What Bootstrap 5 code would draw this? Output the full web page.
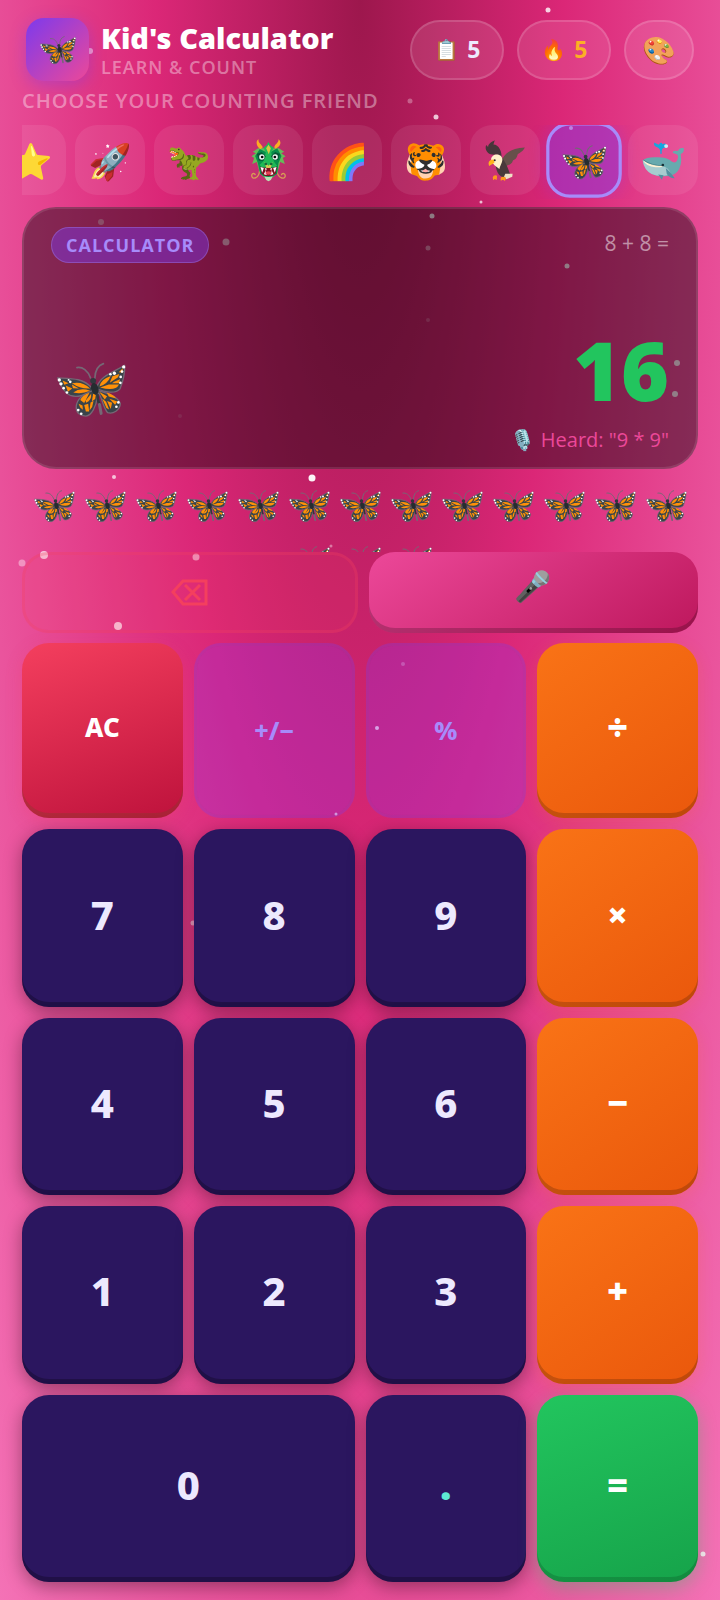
<!DOCTYPE html>
<html lang="en">
<head>
<meta charset="utf-8">
<meta name="viewport" content="width=device-width, initial-scale=1">
<title>Kid's Calculator</title>
<link rel="stylesheet" href="https://cdn.jsdelivr.net/npm/bootstrap@5.3.0/dist/css/bootstrap.min.css">
<style>
  :root { --display-font: "Noto Sans", "Open Sans", "Noto Color Emoji", sans-serif; --violet: #a78bfa; }
  body { font-family: "Open Sans", "Noto Sans", "Noto Color Emoji", sans-serif; color: #ede9fe; line-height: 1.2;
    background: radial-gradient(ellipse farthest-corner at 50% 0, #9d174d 0%, #db2777 40%, #f472b6 100%) no-repeat #f472b6; }
  button { border: 0; padding: 0; color: inherit; }
  .app-shell { padding: 18px 22px; position: relative; z-index: 1; }
  .sparkles i { position: absolute; border-radius: 50%; background: #fff; transform: translate(-50%, -50%); }
  .brand-logo { width: 63px; height: 63px; border-radius: 18px;
    background: linear-gradient(135deg, #7c3aed, #ec4899); box-shadow: 0 4px 16px rgba(124, 58, 237, .4); }
  .brand-name { font: 900 29px/34px var(--display-font); color: #fff; }
  .caption-text { font-size: 18px; line-height: 24px; font-weight: 600; letter-spacing: 1px; color: rgba(255, 255, 255, .4); }
  h2.caption-text { font-size: 20px; }
  .pill-group { gap: 13px; }
  .pill-btn { height: 60px; padding: 0 22px; border-radius: 30px; border: 2px solid rgba(255, 255, 255, .15);
    background: rgba(255, 255, 255, .1); font: 700 23px/1 var(--display-font); }
  .pill-btn span { font-size: 20px; }
  .pill-btn .palette { font-size: 27px; }
  .count-hot { color: #fbb024; }
  .friends { overflow: hidden; height: 74px; gap: 9px; }
  .friend-btn { flex: none; width: 70px; height: 70px; border-radius: 22px; font-size: 35px; line-height: 1;
    background: rgba(255, 255, 255, .08); }
  .friend-btn.chosen { background: rgba(124, 58, 237, .45); border: 3px solid var(--violet); transform: scale(1.08);
    box-shadow: 0 0 16px rgba(124, 58, 237, .3); }
  .screen { height: 262px; border-radius: 34px; border: 2px solid rgba(255, 255, 255, .1); padding: 18px 27px 14px; background: rgba(0, 0, 0, .42); }
  .mode-tag { font-size: 18px; line-height: 24px; font-weight: 700; letter-spacing: 1px; color: var(--violet); padding: 5px 14px; border-radius: 18px;
    background: rgba(124, 58, 237, .45); border: 1px solid rgba(167, 139, 250, .35); }
  .expr { font-size: 21px; color: rgba(255, 255, 255, .5); }
  .answer { font: 900 82px/88px var(--display-font); color: #22c55e; margin-bottom: 14px; }
  .heard { font-size: 20px; line-height: 26px; color: #ec4899; }
  .counters { height: 83px; overflow: hidden; padding: 20px 2px 0; row-gap: 24px; }
  .counters span { width: 51px; height: 32px; display: flex; justify-content: center; }
  .keypad { display: grid; grid-template-columns: repeat(4, 1fr); grid-template-rows: 175fr 177fr 177fr 177fr 187fr; gap: 11px; }
  .key { border-radius: 27px; font: 800 40px/1 var(--display-font); background: #2b165f; padding-bottom: 7px;
    box-shadow: inset 0 -5px 0 rgba(0, 0, 0, .25), 0 5px 18px rgba(0, 0, 0, .35); }
  .key-zero { grid-column: span 2; }
  .key-op { background: linear-gradient(145deg, #f97316, #ea580c); color: #fff; font-size: 36px; font-weight: 900;
    box-shadow: inset 0 -5px 0 rgba(0, 0, 0, .18), 0 4px 16px rgba(249, 115, 22, .2); }
  .key-clear { background: linear-gradient(160deg, #f43f5e, #be123c); color: #fff; font-size: 26px;
    box-shadow: inset 0 -5px 0 rgba(120, 70, 40, .3), 0 4px 16px rgba(244, 63, 94, .25); }
  .key-fn { background: rgba(147, 51, 234, .3); border: 3px solid rgba(124, 58, 237, .3); background-clip: padding-box; color: var(--violet);
    font-size: 25px; box-shadow: none; padding-bottom: 0; }
  .key-equals { background: linear-gradient(160deg, #22c55e, #16a34a); color: #fff; font-size: 36px; font-weight: 900;
    box-shadow: inset 0 -5px 0 rgba(0, 0, 0, .15), 0 6px 18px rgba(34, 197, 94, .35); }
  .key-dot { color: #5eead4; font-weight: 900; }
  .tools { height: 81px; gap: 11px; margin-bottom: 10px; }
  .tools button { flex: 1 1 0; border-radius: 26px; }
  .tools .tool-del { border: 3px solid rgba(244, 63, 94, .25); background: rgba(244, 63, 94, .12); color: #f43f5e; }
  .tools .tool-mic { font-size: 30px; line-height: 1; padding-bottom: 14px;
    background: linear-gradient(145deg, #ec4899, #be185d); box-shadow: inset 0 -5px 0 rgba(0, 0, 0, .2); }
</style>
</head>
<body>
<svg class="d-none" aria-hidden="true">
  <symbol id="butterfly" viewBox="15 30 220 170">
    <g stroke-linecap="round" stroke-linejoin="round">
      <path d="M122 80C114 58 98 46 81 49M135 82C136 58 144 42 161 37" fill="none" stroke="#756875" stroke-width="5"/>
      <g fill="#39444a" stroke="#756875" stroke-width="4">
        <path d="M126 110C98 80 66 82 23 80C31 101 42 125 61 133C79 139 107 134 128 119Z"/>
        <path d="M141 107C153 73 188 64 225 42C226 67 218 96 211 113C197 130 163 122 143 114Z"/>
        <path d="M127 119C101 128 81 145 79 166C78 185 90 195 108 195C126 193 139 166 142 139L145 123C157 137 160 172 174 185C190 190 211 177 212 157C205 140 188 128 145 119Z"/>
      </g>
      <g fill="#ff9108">
        <path d="M66 96Q98 89 121 112Q92 114 66 96ZM70 124Q91 108 121 119Q95 130 70 124ZM47 103L67 112L54 122ZM38 88L56 96L43 101ZM66 100L87 112L69 111Z"/>
        <path d="M149 106Q152 84 183 74Q174 98 149 106ZM151 109L177 100H208Q197 122 151 109ZM188 75L209 68L205 78L180 95ZM193 92L211 84L208 96H187ZM207 63L219 51V64Z"/>
        <path d="M119 125Q97 132 91 147L103 156ZM124 128Q126 148 109 155L107 149ZM103 162L108 181L118 181L115 158ZM86 158L98 163L99 176L91 169ZM122 154L131 150L127 168L119 178ZM130 128L138 131L136 144L126 151Z"/>
        <path d="M148 122L172 135L165 145ZM171 124Q194 131 199 142L177 136ZM157 142L169 152L178 175L170 171ZM172 150L187 155L183 174ZM179 143L203 151L196 161Z"/>
      </g>
      <g fill="#fff"><circle cx="28" cy="86" r="5"/><circle cx="33" cy="98" r="5"/><circle cx="41" cy="111" r="4"/><circle cx="51" cy="124" r="4"/><circle cx="61" cy="92" r="4"/><circle cx="56" cy="86" r="3"/><circle cx="222" cy="47" r="5"/><circle cx="217" cy="61" r="4"/><circle cx="213" cy="77" r="4"/><circle cx="212" cy="95" r="4"/><circle cx="194" cy="66" r="5"/><circle cx="182" cy="69" r="4"/><circle cx="85" cy="177" r="4"/><circle cx="94" cy="188" r="4"/><circle cx="206" cy="154" r="4"/><circle cx="200" cy="167" r="4"/></g>
      <circle cx="130" cy="89" r="9" fill="#30383d"/><ellipse cx="135" cy="113" rx="11" ry="18" transform="rotate(-15 135 113)" fill="#252c30"/>
      <path d="M143 132Q144 151 149 158" fill="none" stroke="#30383d" stroke-width="8"/><path d="M149 160L154 187" fill="none" stroke="#756875" stroke-width="9"/>
    </g>
  </symbol>
  <symbol id="dragon" viewBox="56 44 110 132">
    <path d="M84 143C83 164 64 170 61 159C59 151 68 147 71 154M136 143C139 164 158 170 161 159C162 151 153 147 150 154" fill="none" stroke="#d79c55" stroke-width="4" stroke-linecap="round"/>
    <path d="M80 75L64 85L73 90L60 99L68 104L62 122L76 116L83 142L94 159L111 171L128 159L139 142L146 116L160 122L154 104L162 99L149 90L158 85L142 75Z" fill="#64bd59"/>
    <path d="M85 77L111 90L137 75L150 98L141 119L137 151L111 169L86 151L79 119L71 98Z" fill="#078e4b"/>
    <path d="M87 78C74 69 72 53 81 48C80 60 88 60 94 72ZM133 76C148 69 151 56 141 48C142 59 132 60 128 72Z" fill="#fbad22"/>
    <path d="M96 73L105 66L111 56L118 67L127 73L119 88L128 116L137 127L127 134L111 129L94 134L84 125L94 115L103 88Z" fill="#20b956"/>
    <path d="M104 75L111 64L118 75L112 93Z" fill="#d5c945"/>
    <path d="M76 91L91 87L103 99L96 112H82ZM118 99L131 86L145 92L140 110H127Z" fill="#075936"/>
    <ellipse cx="91" cy="101" rx="8" ry="8" fill="#eef7f4"/><ellipse cx="131" cy="101" rx="8" ry="8" fill="#eef7f4"/><circle cx="92" cy="101" r="4"/><circle cx="130" cy="101" r="4"/>
    <path d="M99 116L111 127L123 116L118 134H104Z" fill="#d2cb50"/><circle cx="103" cy="122" r="4" fill="#17633b"/><circle cx="119" cy="122" r="4" fill="#17633b"/>
    <path d="M86 130Q111 138 136 130L133 150L122 158H100L90 150Z" fill="#820d20"/>
    <path d="M87 131L97 134L92 148ZM135 131L125 134L130 148ZM100 134L106 136L103 143ZM116 136L122 134L119 143ZM97 153L102 142L106 155ZM116 155L121 142L126 153Z" fill="#fff"/>
    <ellipse cx="111" cy="149" rx="9" ry="5" fill="#e74454"/><path d="M98 159Q111 163 124 159L118 170L111 174L104 170Z" fill="#b9e3b3"/>
  </symbol>
  <symbol id="whale" viewBox="526 52 133 120">
    <path d="M584 90Q587 75 573 70Q563 65 566 56Q574 60 579 63Q587 52 591 61Q600 56 604 65Q604 73 593 73Q587 78 589 90Z" fill="#16a6df"/><circle cx="602" cy="67" r="6" fill="#cceaf6"/>
    <path d="M531 110Q545 98 578 101Q605 101 620 114Q635 122 638 101Q640 91 622 88Q621 78 638 82Q641 71 655 73Q658 86 646 91Q652 127 635 145Q617 162 580 157Q539 152 531 110Z" fill="#67aaae"/>
    <path d="M531 110Q558 131 592 128Q610 132 616 151Q587 164 558 151Q535 140 531 110Z" fill="#a6cccf"/>
    <path d="M532 110Q557 128 594 126Q589 132 570 131Q541 129 532 110Z" fill="#fff2d3"/>
    <path d="M533 109Q559 127 593 126" fill="none" stroke="#35777f" stroke-width="2"/>
    <path d="M601 133Q613 143 628 164Q616 166 604 151ZM578 153L589 169L594 155Z" fill="#5290a0"/><circle cx="592" cy="124" r="4" fill="#162e35"/>
  </symbol>
  <symbol id="eagle" viewBox="59 49 126 130">
    <path d="M110 121C117 94 138 77 182 75C177 87 166 91 160 96C158 109 151 111 146 114C143 127 129 128 126 131Z" fill="#66504a"/>
    <path d="M98 96C71 101 59 82 65 67L71 73C71 64 81 58 91 53L87 66C103 66 114 88 111 106Z" fill="#46363a"/>
    <path d="M93 104C91 140 100 164 121 165L138 157C132 140 126 122 109 99Z" fill="#493a3b"/>
    <path d="M80 111C80 98 99 90 111 102C120 113 107 128 105 140L91 129L85 122Z" fill="#fff1ca"/>
    <path d="M88 111C73 111 70 120 74 131L90 121Z" fill="#ffb21b"/><circle cx="91" cy="113" r="3" fill="#29242a"/>
    <path d="M123 154L145 154L144 163L126 171L119 162Z" fill="#eee0c5"/>
    <path d="M85 165Q88 156 98 160L97 173L91 170L86 174ZM109 166Q115 160 125 166L122 176L116 172L109 175Z" fill="#ff991c"/>
  </symbol>
</svg>

<div class="sparkles position-absolute top-0 start-0 w-100 h-100 overflow-hidden" id="sparkles" aria-hidden="true"></div>

<main class="app-shell d-flex flex-column min-vh-100">
  <header class="d-flex align-items-center px-1">
    <div class="brand-logo d-flex align-items-center justify-content-center"><svg width="38" height="30"><use href="#butterfly"/></svg></div>
    <div class="ms-2 ps-1 me-auto">
      <h1 class="brand-name mb-0">Kid's Calculator</h1>
      <div class="caption-text">LEARN &amp; COUNT</div>
    </div>
    <div class="pill-group d-flex">
      <button type="button" class="pill-btn d-flex align-items-center gap-2"><span>📋</span>5</button>
      <button type="button" class="pill-btn count-hot d-flex align-items-center gap-2"><span>🔥</span>5</button>
      <button type="button" class="pill-btn px-3 d-flex align-items-center" aria-label="Theme"><span class="palette">🎨</span></button>
    </div>
  </header>

  <h2 class="caption-text my-2 pb-1">CHOOSE YOUR COUNTING FRIEND</h2>
  <div class="friends d-flex justify-content-end">
    <button type="button" class="friend-btn">⭐</button>
    <button type="button" class="friend-btn">🚀</button>
    <button type="button" class="friend-btn">🦖</button>
    <button type="button" class="friend-btn" aria-label="Dragon"><svg width="37" height="44"><use href="#dragon"/></svg></button>
    <button type="button" class="friend-btn">🌈</button>
    <button type="button" class="friend-btn">🐯</button>
    <button type="button" class="friend-btn" aria-label="Eagle"><svg width="42" height="43"><use href="#eagle"/></svg></button>
    <button type="button" class="friend-btn chosen" aria-label="Butterfly" aria-pressed="true"><svg width="43" height="34"><use href="#butterfly"/></svg></button>
    <button type="button" class="friend-btn" aria-label="Whale"><svg width="44" height="40"><use href="#whale"/></svg></button>
  </div>

  <section class="screen d-flex flex-column justify-content-between mt-2">
    <div class="d-flex justify-content-between align-items-start">
      <span class="mode-tag">CALCULATOR</span>
      <span class="expr mt-1">8 + 8 =</span>
    </div>
    <div class="d-flex justify-content-between align-items-center">
      <svg class="ms-1" width="73" height="57"><use href="#butterfly"/></svg>
      <div class="text-end">
        <div class="answer">16</div>
        <div class="heard">🎙️ Heard: "9 * 9"</div>
      </div>
    </div>
  </section>

  <div class="counters d-flex flex-wrap justify-content-center align-content-start" id="counters"></div>

  <div class="tools d-flex">
    <button type="button" class="tool-del" aria-label="Delete">
      <svg width="37" height="27" viewBox="0 0 37 27" fill="none" stroke="currentColor" stroke-width="3"><path d="M12 2H35V25H12L2 13ZM14 6l15 15M29 6L14 21"/></svg>
    </button>
    <button type="button" class="tool-mic" aria-label="Speak">🎤</button>
  </div>

  <div class="keypad flex-grow-1">
    <button type="button" class="key key-clear">AC</button>
    <button type="button" class="key key-fn">+/−</button>
    <button type="button" class="key key-fn">%</button>
    <button type="button" class="key key-op">÷</button>
    <button type="button" class="key">7</button>
    <button type="button" class="key">8</button>
    <button type="button" class="key">9</button>
    <button type="button" class="key key-op">×</button>
    <button type="button" class="key">4</button>
    <button type="button" class="key">5</button>
    <button type="button" class="key">6</button>
    <button type="button" class="key key-op">−</button>
    <button type="button" class="key">1</button>
    <button type="button" class="key">2</button>
    <button type="button" class="key">3</button>
    <button type="button" class="key key-op">+</button>
    <button type="button" class="key key-zero">0</button>
    <button type="button" class="key key-dot">.</button>
    <button type="button" class="key key-equals">=</button>
  </div>
</main>

<script src="https://cdn.jsdelivr.net/npm/bootstrap@5.3.0/dist/js/bootstrap.bundle.min.js"></script>
<script>
  // One friend for each unit of the answer
  document.getElementById('counters').innerHTML = '<span><svg width="43" height="34"><use href="#butterfly"/></svg></span>'.repeat(16);
  // Sparkles: x, y (thousandths of the page), diameter, opacity
  const dots = [[761,6,5,.8],[125,32,6,.5],[570,63,5,.3],[605,73,5,.75],[793,80,4,.7],[668,126,3,.7],[140,139,6,.4],[314,151,7,.55],
    [600,135,5,.8],[594,155,5,.4],[788,166,5,.8],[594,200,4,.2],[940,227,6,.8],[937,246,6,.8],[250,260,4,.15],[159,298,4,.7],[434,299,7,.95],
    [61,347,8,.7],[31,352,7,.4],[272,348,7,.5],[164,391,8,.7],[460,341,3,.4],[560,415,4,.3],[523,455,4,.8],[466,509,3,.7],[268,577,5,.5],[976,971,5,.8]];
  document.getElementById('sparkles').innerHTML = dots.map(([x, y, d, o]) =>
    `<i style="left:${x / 10}%;top:${y / 10}%;width:${d}px;height:${d}px;opacity:${o}"></i>`).join('');
</script>
</body>
</html>
